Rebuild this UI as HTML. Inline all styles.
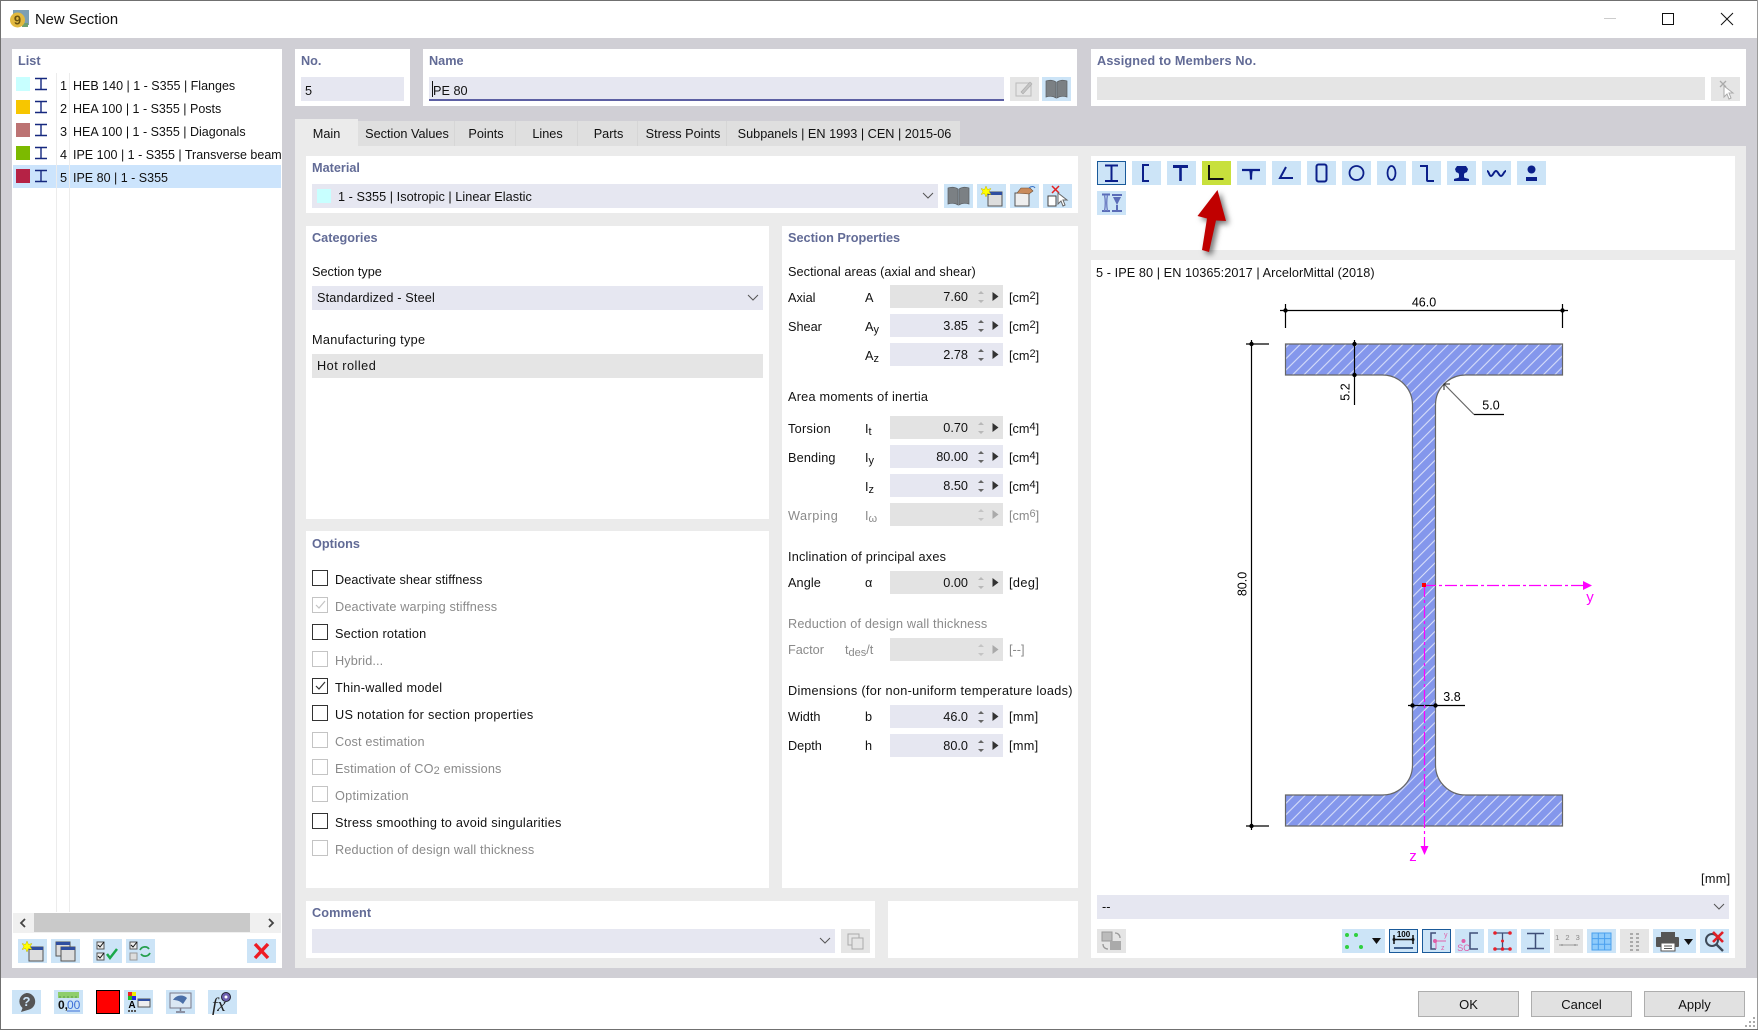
<!DOCTYPE html>
<html><head><meta charset="utf-8"><title>New Section</title>
<style>
html,body{margin:0;padding:0}
body{width:1758px;height:1030px;overflow:hidden;position:relative;background:#fff;font-family:"Liberation Sans",sans-serif;font-size:12.7px;color:#111}
div,svg{position:absolute}
svg{overflow:visible}
.p{background:#fff}
.t{white-space:nowrap;line-height:16px;height:16px}
.h{white-space:nowrap;line-height:16px;height:16px;font-weight:bold;color:#626b96}
.g{color:#8a8a8a}
.i{background:#e6e7f1;height:24px}
.d{background:#e5e5e5;height:24px}
.b{background:#cce4f7;width:29px;height:24px}
.n{left:890px;width:113px;height:23px;line-height:25px;background:#e6e7f1;text-align:right}
.n span{position:absolute;right:35px;top:0}
.n.e{background:#e3e3e3}
.n svg{left:0;top:0;width:113px;height:23px}
.c{left:312px;width:14px;height:14px;border:1px solid #333;background:#fff}
.c.o{border-color:#c4c4c4}
.tab{top:121px;height:25px;line-height:27px;background:#dfdfdf;text-align:center;border-right:1px solid #d6d6d6;white-space:nowrap;box-sizing:border-box;padding-left:2px}
.s{font-size:11px;vertical-align:-2px;line-height:0}
sup{font-size:11px;line-height:0;vertical-align:3px}
.btn{top:991px;width:101px;height:26px;box-sizing:border-box;background:#e1e1e1;border:1px solid #adadad;text-align:center;line-height:26px;font-size:13px}
</style></head><body>
<svg width="0" height="0" style="left:0;top:0"><defs>
<pattern id="hat" patternUnits="userSpaceOnUse" width="11.4" height="11.4" x="1" y="2"><rect width="11.4" height="11.4" fill="#8497ec"/><path d="M-1 12.4L12.4-1M-1 1L1-1M10.4 12.4L12.4 10.4" stroke="#dde3fa" stroke-width="1"/></pattern>
<symbol id="sp" viewBox="0 0 113 23"><path d="M88 9l3-3 3 3zM88 15l3 3 3-3z" fill="#666"/><path d="M102.500 7v9l6-4.500z" fill="#333"/></symbol>
<symbol id="spg" viewBox="0 0 113 23"><path d="M88 9l3-3 3 3zM88 15l3 3 3-3z" fill="#b8b8b8"/><path d="M102.500 7v9l6-4.500z" fill="#333"/></symbol>
<symbol id="spd" viewBox="0 0 113 23"><path d="M88 9l3-3 3 3zM88 15l3 3 3-3z" fill="#c4c4c4"/><path d="M102.500 7v9l6-4.500z" fill="#aaa"/></symbol>
<symbol id="ib" viewBox="0 0 14 14"><path d="M1 1.500h12M7 1.500v11M1 12.500h12" stroke="#15287f" stroke-width="1.400" fill="none"/></symbol>
<symbol id="book" viewBox="0 0 29 24"><path d="M4 4c3-1 7-1 10 1v16c-3-2-7-2-10-1zM25 4c-3-1-7-1-10 1v16c3-2 7-2 10-1z" fill="#7b8084" stroke="#5a5e62" stroke-width=".7"/></symbol>
<symbol id="win" viewBox="0 0 29 24"><rect x="11" y="8" width="14" height="14" fill="#ddd" stroke="#555"/><rect x="11" y="8" width="14" height="3" fill="#2f4ea0"/><path d="M9 2l1.500 3.500 3.500-1-2 3 2 3-3.500-1-1.500 3.500-1.500-3.500-3.500 1 2-3-2-3 3.500 1z" fill="#ff0" stroke="#c8b400" stroke-width=".5"/></symbol>
</defs></svg>

<!-- background -->
<div style="left:0;top:38px;width:1758px;height:940px;background:#d0cfd5"></div>
<div style="left:0;top:0;width:1758px;height:1px;background:#707070"></div>
<div style="left:0;top:0;width:1px;height:1030px;background:#707070"></div>
<div style="left:1757px;top:0;width:1px;height:1030px;background:#9a9a9a"></div>
<div style="left:0;top:1029px;width:1758px;height:1px;background:#707070"></div>

<!-- title -->
<svg style="left:10px;top:10px" width="19" height="19" viewBox="0 0 19 19"><rect x="3" y="0" width="16" height="15" fill="#7d9fb3"/><rect x="12" y="13" width="6" height="4" fill="#6fa06f"/><circle cx="7.500" cy="10" r="7.500" fill="#e2b93f"/><text x="7.500" y="14.500" text-anchor="middle" font-size="13" font-weight="bold" fill="#6a5210" font-family="Liberation Sans">9</text></svg>
<div class="t" style="left:35px;top:12px;font-size:14.8px">New Section</div>
<svg style="left:1600px;top:10px" width="140" height="18"><path d="M4 8.500h12" stroke="#ccc"/><rect x="62.500" y="3.500" width="11" height="11" fill="none" stroke="#111"/><path d="M121 3l12 12M133 3l-12 12" stroke="#111" stroke-width="1"/></svg>

<!-- List panel -->
<div class="p" style="left:12px;top:49px;width:270px;height:919px"></div>
<div class="h" style="left:18px;top:53px">List</div>
<div style="left:13px;top:165px;width:268px;height:23px;background:#cce4fc"></div>
<div style="left:56px;top:73px;width:1px;height:839px;background:#ececec"></div>
<div style="left:69px;top:73px;width:1px;height:839px;background:#ececec"></div>
<div style="left:16px;top:77px;width:14px;height:14px;background:#c8ffff"></div>
<div style="left:16px;top:100px;width:14px;height:14px;background:#f7c600"></div>
<div style="left:16px;top:123px;width:14px;height:14px;background:#bc7373"></div>
<div style="left:16px;top:146px;width:14px;height:14px;background:#7cba00"></div>
<div style="left:16px;top:169px;width:14px;height:14px;background:#b52245"></div>
<svg style="left:34px;top:77px" width="14" height="14"><use href="#ib"/></svg>
<svg style="left:34px;top:100px" width="14" height="14"><use href="#ib"/></svg>
<svg style="left:34px;top:123px" width="14" height="14"><use href="#ib"/></svg>
<svg style="left:34px;top:146px" width="14" height="14"><use href="#ib"/></svg>
<svg style="left:34px;top:169px" width="14" height="14"><use href="#ib"/></svg>
<div class="t" style="left:60px;top:78px">1</div><div class="t" style="left:73px;top:78px;font-size:12.5px">HEB 140 | 1 - S355 | Flanges</div>
<div class="t" style="left:60px;top:101px">2</div><div class="t" style="left:73px;top:101px;font-size:12.5px">HEA 100 | 1 - S355 | Posts</div>
<div class="t" style="left:60px;top:124px">3</div><div class="t" style="left:73px;top:124px;font-size:12.5px">HEA 100 | 1 - S355 | Diagonals</div>
<div class="t" style="left:60px;top:147px">4</div><div class="t" style="left:73px;top:147px;width:208px;overflow:hidden;font-size:12.5px">IPE 100 | 1 - S355 | Transverse beam</div>
<div class="t" style="left:60px;top:170px">5</div><div class="t" style="left:73px;top:170px;font-size:12.5px">IPE 80 | 1 - S355</div>
<!-- scrollbar -->
<div style="left:13px;top:913px;width:268px;height:20px;background:#f0f0f0"></div>
<div style="left:34px;top:913px;width:216px;height:19px;background:#c9c9c9"></div>
<svg style="left:13px;top:913px" width="268" height="20"><path d="M12 6l-4 4 4 4M256 6l4 4-4 4" fill="none" stroke="#444" stroke-width="1.800"/></svg>
<!-- list toolbar -->
<div class="b" style="left:18px;top:939px"></div><svg style="left:18px;top:939px" width="29" height="24"><use href="#win"/></svg>
<div class="b" style="left:51px;top:939px"></div><svg style="left:51px;top:939px" width="29" height="24"><rect x="5" y="3" width="14" height="14" fill="#ddd" stroke="#555"/><rect x="5" y="3" width="14" height="3" fill="#2f4ea0"/><rect x="10" y="8" width="14" height="14" fill="#ddd" stroke="#555"/><rect x="10" y="8" width="14" height="3" fill="#2f4ea0"/></svg>
<div class="b" style="left:93px;top:939px"></div><svg style="left:93px;top:939px" width="29" height="24"><rect x="4" y="3" width="7" height="7" fill="#eee" stroke="#555"/><rect x="4" y="14" width="7" height="7" fill="#eee" stroke="#555"/><path d="M5 6l2 2 4-5M5 17l2 2 4-5" fill="none" stroke="#111"/><path d="M14 15l3 4 7-9" fill="none" stroke="#1aa84a" stroke-width="2.500"/></svg>
<div class="b" style="left:126px;top:939px"></div><svg style="left:126px;top:939px" width="29" height="24"><rect x="4" y="3" width="7" height="7" fill="#eee" stroke="#555"/><rect x="4" y="14" width="7" height="7" fill="#ddd" stroke="#999"/><path d="M5 6l2 2 4-5" fill="none" stroke="#111"/><path d="M14 11c2-4 7-4 9-1M24 14c-2 4-7 4-9 1" fill="none" stroke="#27a04f" stroke-width="1.800"/></svg>
<div class="b" style="left:247px;top:939px"></div><svg style="left:247px;top:939px" width="29" height="24"><path d="M8 5l13 14M21 5L8 19" stroke="#ee1c24" stroke-width="3.400"/></svg>

<!-- No -->
<div class="p" style="left:295px;top:49px;width:115px;height:57px"></div>
<div class="h" style="left:301px;top:53px">No.</div>
<div class="i" style="left:301px;top:77px;width:103px"></div>
<div class="t" style="left:305px;top:83px">5</div>
<!-- Name -->
<div class="p" style="left:423px;top:49px;width:654px;height:57px"></div>
<div class="h" style="left:429px;top:53px">Name</div>
<div class="i" style="left:429px;top:77px;width:575px"></div>
<div style="left:429px;top:99px;width:575px;height:2px;background:#5c5fa3"></div>
<div style="left:432px;top:81px;width:1px;height:16px;background:#111"></div>
<div class="t" style="left:433px;top:83px">PE 80</div>
<div class="d" style="left:1010px;top:77px;width:29px"></div>
<svg style="left:1010px;top:77px" width="29" height="24"><rect x="6" y="6" width="15" height="13" fill="none" stroke="#bbb"/><path d="M11 15l9-10 2 2-9 10z" fill="#c4c4c4" stroke="#aaa" stroke-width=".6"/></svg>
<div class="b" style="left:1042px;top:77px"></div><svg style="left:1042px;top:77px" width="29" height="24"><use href="#book"/></svg>
<!-- Assigned -->
<div class="p" style="left:1091px;top:49px;width:655px;height:57px"></div>
<div class="h" style="left:1097px;top:53px;letter-spacing:.15px">Assigned to Members No.</div>
<div class="d" style="left:1097px;top:77px;width:608px;height:23px"></div>
<div class="d" style="left:1711px;top:77px;width:29px"></div>
<svg style="left:1711px;top:77px" width="29" height="24"><path d="M9 4l6 6M15 4l-6 6" stroke="#aaa" stroke-width="1.300"/><path d="M13 9v11l3-3 2 5 2-1-2-5h4z" fill="#fff" stroke="#aaa"/></svg>

<!-- Tabs -->
<div style="left:295px;top:146px;width:1451px;height:822px;background:#ebebeb"></div>
<div style="left:295px;top:119px;width:63px;height:27px;background:#ebebeb;text-align:center;line-height:31px">Main</div>
<div class="tab" style="left:358px;width:97px">Section Values</div>
<div class="tab" style="left:455px;width:61px">Points</div>
<div class="tab" style="left:516px;width:62px">Lines</div>
<div class="tab" style="left:578px;width:60px">Parts</div>
<div class="tab" style="left:638px;width:89px">Stress Points</div>
<div class="tab" style="left:727px;width:233px;border:0">Subpanels | EN 1993 | CEN | 2015-06</div>

<!-- Material -->
<div class="p" style="left:306px;top:156px;width:772px;height:57px"></div>
<div class="h" style="left:312px;top:160px">Material</div>
<div class="i" style="left:312px;top:184px;width:626px"></div>
<div style="left:317px;top:189px;width:14px;height:14px;background:#c8ffff"></div>
<div class="t" style="left:338px;top:189px;letter-spacing:.03px">1 - S355 | Isotropic | Linear Elastic</div>
<svg style="left:922px;top:192px" width="12" height="8"><path d="M1 1l5 5 5-5" fill="none" stroke="#555"/></svg>
<div class="b" style="left:944px;top:184px"></div><svg style="left:944px;top:184px" width="29" height="24"><use href="#book"/></svg>
<div class="b" style="left:977px;top:184px"></div><svg style="left:977px;top:184px" width="29" height="24"><use href="#win"/></svg>
<div class="b" style="left:1010px;top:184px"></div><svg style="left:1010px;top:184px" width="29" height="24"><rect x="5" y="9" width="14" height="13" fill="#eee" stroke="#555"/><path d="M7 9l4-5h9l3 3-4 3z" fill="#c98a5a" stroke="#6c4a30" stroke-width=".6"/><path d="M19 4c2-2 5-2 6 0" fill="none" stroke="#3a74c8"/></svg>
<div class="b" style="left:1043px;top:184px"></div><svg style="left:1043px;top:184px" width="29" height="24"><path d="M9 2l7 7M16 2l-7 7" stroke="#e32222" stroke-width="1.500"/><rect x="5" y="12" width="8" height="10" fill="#fff" stroke="#444"/><path d="M15 9v11l3-3 2 5 2-1-2-5h4z" fill="#fff" stroke="#666"/></svg>

<!-- Categories -->
<div class="p" style="left:306px;top:226px;width:463px;height:293px"></div>
<div class="h" style="left:312px;top:230px">Categories</div>
<div class="t" style="left:312px;top:264px">Section type</div>
<div class="i" style="left:312px;top:286px;width:451px"></div>
<div class="t" style="left:317px;top:290px;letter-spacing:.15px">Standardized - Steel</div>
<svg style="left:747px;top:294px" width="12" height="8"><path d="M1 1l5 5 5-5" fill="none" stroke="#555"/></svg>
<div class="t" style="left:312px;top:332px;letter-spacing:.3px">Manufacturing type</div>
<div class="d" style="left:312px;top:354px;width:451px"></div>
<div class="t" style="left:317px;top:358px;letter-spacing:.5px">Hot rolled</div>

<!-- Options -->
<div class="p" style="left:306px;top:531px;width:463px;height:357px"></div>
<div class="h" style="left:312px;top:536px">Options</div>
<div class="c" style="top:570px"></div><div class="t" style="left:335px;top:572px;letter-spacing:.09px">Deactivate shear stiffness</div>
<div class="c o" style="top:597px"></div><svg style="left:312px;top:597px" width="16" height="16"><path d="M4 8l3 3 6-7" fill="none" stroke="#c4c4c4" stroke-width="1.200"/></svg><div class="t g" style="left:335px;top:599px;letter-spacing:.16px">Deactivate warping stiffness</div>
<div class="c" style="top:624px"></div><div class="t" style="left:335px;top:626px;letter-spacing:.2px">Section rotation</div>
<div class="c o" style="top:651px"></div><div class="t g" style="left:335px;top:653px;letter-spacing:.12px">Hybrid...</div>
<div class="c" style="top:678px"></div><svg style="left:312px;top:678px" width="16" height="16"><path d="M4 8l3 3 6-7" fill="none" stroke="#333" stroke-width="1.200"/></svg><div class="t" style="left:335px;top:680px;letter-spacing:.26px">Thin-walled model</div>
<div class="c" style="top:705px"></div><div class="t" style="left:335px;top:707px;letter-spacing:.3px">US notation for section properties</div>
<div class="c o" style="top:732px"></div><div class="t g" style="left:335px;top:734px;letter-spacing:.15px">Cost estimation</div>
<div class="c o" style="top:759px"></div><div class="t g" style="left:335px;top:761px;letter-spacing:.17px">Estimation of CO<span style="font-size:11px;vertical-align:-1px">2</span> emissions</div>
<div class="c o" style="top:786px"></div><div class="t g" style="left:335px;top:788px;letter-spacing:.28px">Optimization</div>
<div class="c" style="top:813px"></div><div class="t" style="left:335px;top:815px;letter-spacing:.26px">Stress smoothing to avoid singularities</div>
<div class="c o" style="top:840px"></div><div class="t g" style="left:335px;top:842px;letter-spacing:.16px">Reduction of design wall thickness</div>

<!-- Section Properties -->
<div class="p" style="left:782px;top:226px;width:296px;height:662px"></div>
<div class="h" style="left:788px;top:230px">Section Properties</div>
<div class="t" style="left:788px;top:264px;letter-spacing:.07px">Sectional areas (axial and shear)</div>
<div class="t" style="left:788px;top:290px">Axial</div><div class="t" style="left:865px;top:290px">A</div>
<div class="n e" style="top:285px"><span>7.60</span><svg><use href="#spg"/></svg></div><div class="t" style="left:1009px;top:290px">[cm<sup>2</sup>]</div>
<div class="t" style="left:788px;top:319px">Shear</div><div class="t" style="left:865px;top:319px">A<span class="s">y</span></div>
<div class="n" style="top:314px"><span>3.85</span><svg><use href="#sp"/></svg></div><div class="t" style="left:1009px;top:319px">[cm<sup>2</sup>]</div>
<div class="t" style="left:865px;top:348px">A<span class="s">z</span></div>
<div class="n" style="top:343px"><span>2.78</span><svg><use href="#sp"/></svg></div><div class="t" style="left:1009px;top:348px">[cm<sup>2</sup>]</div>
<div class="t" style="left:788px;top:389px;letter-spacing:.24px">Area moments of inertia</div>
<div class="t" style="left:788px;top:421px;letter-spacing:.3px">Torsion</div><div class="t" style="left:865px;top:421px">I<span class="s">t</span></div>
<div class="n e" style="top:416px"><span>0.70</span><svg><use href="#spg"/></svg></div><div class="t" style="left:1009px;top:421px">[cm<sup>4</sup>]</div>
<div class="t" style="left:788px;top:450px;letter-spacing:.15px">Bending</div><div class="t" style="left:865px;top:450px">I<span class="s">y</span></div>
<div class="n" style="top:445px"><span>80.00</span><svg><use href="#sp"/></svg></div><div class="t" style="left:1009px;top:450px">[cm<sup>4</sup>]</div>
<div class="t" style="left:865px;top:479px">I<span class="s">z</span></div>
<div class="n" style="top:474px"><span>8.50</span><svg><use href="#sp"/></svg></div><div class="t" style="left:1009px;top:479px">[cm<sup>4</sup>]</div>
<div class="t g" style="left:788px;top:508px;letter-spacing:.5px">Warping</div><div class="t g" style="left:865px;top:508px">I<span class="s">ω</span></div>
<div class="n e" style="top:503px"><svg><use href="#spd"/></svg></div><div class="t g" style="left:1009px;top:508px">[cm<sup>6</sup>]</div>
<div class="t" style="left:788px;top:549px;letter-spacing:.2px">Inclination of principal axes</div>
<div class="t" style="left:788px;top:575px;letter-spacing:.1px">Angle</div><div class="t" style="left:865px;top:575px">α</div>
<div class="n e" style="top:571px"><span>0.00</span><svg><use href="#spg"/></svg></div><div class="t" style="left:1009px;top:575px;letter-spacing:.4px">[deg]</div>
<div class="t g" style="left:788px;top:616px;letter-spacing:.16px">Reduction of design wall thickness</div>
<div class="t g" style="left:788px;top:642px">Factor</div><div class="t g" style="left:845px;top:642px">t<span class="s">des</span>/t</div>
<div class="n e" style="top:638px"><svg><use href="#spd"/></svg></div><div class="t g" style="left:1009px;top:642px">[--]</div>
<div class="t" style="left:788px;top:683px;letter-spacing:.32px">Dimensions (for non-uniform temperature loads)</div>
<div class="t" style="left:788px;top:709px">Width</div><div class="t" style="left:865px;top:709px">b</div>
<div class="n" style="top:705px"><span>46.0</span><svg><use href="#sp"/></svg></div><div class="t" style="left:1009px;top:709px;letter-spacing:.3px">[mm]</div>
<div class="t" style="left:788px;top:738px">Depth</div><div class="t" style="left:865px;top:738px">h</div>
<div class="n" style="top:734px"><span>80.0</span><svg><use href="#sp"/></svg></div><div class="t" style="left:1009px;top:738px;letter-spacing:.3px">[mm]</div>

<!-- Comment -->
<div class="p" style="left:306px;top:901px;width:569px;height:57px"></div>
<div class="h" style="left:312px;top:905px;letter-spacing:.1px">Comment</div>
<div class="i" style="left:312px;top:929px;width:523px"></div>
<svg style="left:819px;top:937px" width="12" height="8"><path d="M1 1l5 5 5-5" fill="none" stroke="#555"/></svg>
<div class="d" style="left:841px;top:929px;width:29px"></div>
<svg style="left:841px;top:929px" width="29" height="24"><rect x="7" y="5" width="11" height="11" fill="none" stroke="#aaa"/><rect x="11" y="9" width="11" height="11" fill="#e5e5e5" stroke="#aaa"/></svg>
<div class="p" style="left:888px;top:901px;width:190px;height:57px"></div>

<!-- section type toolbar -->
<div class="p" style="left:1091px;top:156px;width:644px;height:94px"></div>
<div style="left:1097px;top:161px;width:27px;height:22px;background:#cce4f7;border:1px solid #1a5a9a"></div>
<svg style="left:1097px;top:161px" width="29" height="24"><path d="M8 4.500h13M8 20h13" stroke="#0b1f8a" stroke-width="2"/><path d="M14.500 5v14" stroke="#0b1f8a" stroke-width="2"/></svg>
<div class="b" style="left:1132px;top:161px"></div><svg style="left:1132px;top:161px" width="29" height="24"><path d="M17 4H11v16h6" fill="none" stroke="#0b1f8a" stroke-width="2"/></svg>
<div class="b" style="left:1167px;top:161px"></div><svg style="left:1167px;top:161px" width="29" height="24"><path d="M6 5.500h15" stroke="#0b1f8a" stroke-width="3"/><path d="M13.500 5v15" stroke="#0b1f8a" stroke-width="2.600"/></svg>
<div class="b" style="left:1202px;top:161px;background:#c8e03c"></div><svg style="left:1202px;top:161px" width="29" height="24"><path d="M7 4v14h14.500" fill="none" stroke="#111" stroke-width="2"/></svg>
<div class="b" style="left:1237px;top:161px"></div><svg style="left:1237px;top:161px" width="29" height="24"><path d="M5 9h18" stroke="#0b1f8a" stroke-width="2.200"/><path d="M12.500 9c1 2 1 6 1 9h1c0-3 0-7 1-9" fill="#0b1f8a" stroke="#0b1f8a" stroke-width="1.200"/></svg>
<div class="b" style="left:1272px;top:161px"></div><svg style="left:1272px;top:161px" width="29" height="24"><path d="M14 6L8 17h13" fill="none" stroke="#0b1f8a" stroke-width="2"/></svg>
<div class="b" style="left:1307px;top:161px"></div><svg style="left:1307px;top:161px" width="29" height="24"><rect x="9.500" y="3.500" width="10" height="17" rx="2" fill="none" stroke="#0b1f8a" stroke-width="2"/></svg>
<div class="b" style="left:1342px;top:161px"></div><svg style="left:1342px;top:161px" width="29" height="24"><circle cx="14.500" cy="12" r="7" fill="none" stroke="#0b1f8a" stroke-width="1.800"/></svg>
<div class="b" style="left:1377px;top:161px"></div><svg style="left:1377px;top:161px" width="29" height="24"><ellipse cx="14.500" cy="12" rx="4" ry="7" fill="none" stroke="#0b1f8a" stroke-width="1.800"/></svg>
<div class="b" style="left:1412px;top:161px"></div><svg style="left:1412px;top:161px" width="29" height="24"><path d="M8 5h7v14c0 1 .5 1 1 1h6" fill="none" stroke="#0b1f8a" stroke-width="2"/></svg>
<div class="b" style="left:1447px;top:161px"></div><svg style="left:1447px;top:161px" width="29" height="24"><path d="M10 5h9l2 3-1 3c-2 1-3 1-3 3v2c0 1 2 1 5 2v2H7v-2c3-1 5-1 5-2v-2c0-2-1-2-3-3L8 8z" fill="#0b1f8a"/></svg>
<div class="b" style="left:1482px;top:161px"></div><svg style="left:1482px;top:161px" width="29" height="24"><path d="M5 10c2 0 2 5 4 5s3-5 5-5 3 5 5 5 3-5 5-5" fill="none" stroke="#0b1f8a" stroke-width="2"/></svg>
<div class="b" style="left:1517px;top:161px"></div><svg style="left:1517px;top:161px" width="29" height="24"><circle cx="14.500" cy="8.500" r="4" fill="#0b1f8a"/><rect x="9" y="16" width="11" height="4" fill="#0b1f8a"/></svg>
<div class="b" style="left:1097px;top:191px"></div><svg style="left:1097px;top:191px" width="29" height="24"><path d="M5 3.500h8M5 20h8" stroke="#5a6cb8" stroke-width="2"/><path d="M7.500 4c1 5 1 11 0 16M10.500 4c-1 5-1 11 0 16" fill="none" stroke="#6f80c4" stroke-width="1.400"/><path d="M15 3h10v2H15zM16 6l4 8 4-8zM19 14h2v5h-2zM15 19h10v2H15z" fill="#5a6cb8"/></svg>

<!-- Arrow -->
<svg style="left:1190px;top:185px;filter:drop-shadow(3px 3px 3px rgba(0,0,0,.55))" width="50" height="72" viewBox="1190 185 50 72"><path d="M1217.500 190L1197.500 216L1207 218.500L1202 250L1209 252L1216 220.500L1226 221z" fill="#c00000"/></svg>

<!-- Preview -->
<div class="p" style="left:1091px;top:260px;width:644px;height:698px"></div>
<div class="t" style="left:1096px;top:265px;letter-spacing:.07px">5 - IPE 80 | EN 10365:2017 | ArcelorMittal (2018)</div>
<svg style="left:1091px;top:260px" width="644" height="698" viewBox="1091 260 644 698" font-family="Liberation Sans" font-size="12.500">
<path d="M1285.500 344H1562.500V375H1465.500A30 30 0 0 0 1435.500 405V765A30 30 0 0 0 1465.500 795H1562.500V826H1285.500V795H1382.500A30 30 0 0 0 1412.500 765V405A30 30 0 0 0 1382.500 375H1285.500Z" fill="url(#hat)" stroke="#666" stroke-width="1.200"/>
<g stroke="#000" stroke-width="1.200" fill="none">
<path d="M1280 310.500H1568M1285.500 304V328M1562.500 304V328"/>
<path d="M1251.500 340V830M1246 344H1269M1246 826H1269"/>
<path d="M1354.500 340V405"/>
<path d="M1408 705.500H1465"/>
<path d="M1474 414.500H1504"/>
</g>
<path d="M1444.500 384.500L1474 414.500" stroke="#666" stroke-width="1.200" fill="none"/>
<path d="M1444 390v-6h6" stroke="#222" fill="none"/>
<g fill="#000"><circle cx="1285.500" cy="310.500" r="2.200"/><circle cx="1562.500" cy="310.500" r="2.200"/><circle cx="1251.500" cy="344" r="2.200"/><circle cx="1251.500" cy="826" r="2.200"/><circle cx="1354.500" cy="344" r="2.200"/><circle cx="1354.500" cy="375" r="2.200"/><circle cx="1412.500" cy="705.500" r="2.200"/><circle cx="1435.500" cy="705.500" r="2.200"/></g>
<text x="1424" y="306.500" text-anchor="middle">46.0</text>
<text x="1491" y="409.500" text-anchor="middle">5.0</text>
<text x="1452" y="701" text-anchor="middle">3.8</text>
<text transform="translate(1349.500 392) rotate(-90)" text-anchor="middle">5.2</text>
<text transform="translate(1246.500 584) rotate(-90)" text-anchor="middle">80.0</text>
<path d="M1424 585.500H1584" stroke="#f0f" stroke-width="1.200" stroke-dasharray="12 3 3 3" fill="none"/>
<path d="M1424.500 585V848" stroke="#f0f" stroke-width="1.200" stroke-dasharray="12 3 3 3" fill="none"/>
<path d="M1583 581l9 4.500-9 4.500zM1420.500 846l4 9 4-9z" fill="#f0f"/>
<rect x="1422" y="583" width="4" height="4" fill="#f00"/>
<text x="1590" y="602" text-anchor="middle" fill="#f0f" font-size="15">y</text>
<text x="1413" y="861" text-anchor="middle" fill="#f0f" font-size="15">z</text>
</svg>
<div class="t" style="left:1701px;top:871px;letter-spacing:.3px">[mm]</div>
<div class="i" style="left:1097px;top:895px;width:632px"></div>
<div class="t" style="left:1102px;top:899px">--</div>
<svg style="left:1713px;top:903px" width="12" height="8"><path d="M1 1l5 5 5-5" fill="none" stroke="#555"/></svg>

<!-- preview toolbar -->
<div class="d" style="left:1097px;top:929px;width:29px"></div>
<svg style="left:1097px;top:929px" width="29" height="24"><rect x="5" y="3" width="10" height="9" fill="#bbb" stroke="#999"/><rect x="13" y="12" width="11" height="9" fill="#aaa"/><path d="M18 4c3 0 5 2 5 5M11 20c-3 0-5-2-5-5" fill="none" stroke="#999" stroke-width="1.300"/></svg>
<div class="b" style="left:1342px;top:929px;width:43px"></div>
<svg style="left:1342px;top:929px" width="43" height="24"><g fill="#2fd03f"><circle cx="5" cy="6" r="2"/><circle cx="14" cy="6" r="2"/><circle cx="5" cy="18" r="2"/><circle cx="19" cy="18" r="2"/></g><path d="M30 9h9l-4.500 6z" fill="#111"/></svg>
<div style="left:1389px;top:929px;width:27px;height:22px;background:#cce4f7;border:1px solid #1a5a9a"></div>
<svg style="left:1389px;top:929px" width="29" height="24"><path d="M5 6v9M24 6v9M5 10.500h19" stroke="#111" stroke-width="1.500"/><circle cx="5" cy="10.500" r="1.500" fill="#111"/><circle cx="24" cy="10.500" r="1.500" fill="#111"/><path d="M5 18h19v2H5z" fill="#3f5f8c"/><text x="14.500" y="8" text-anchor="middle" font-size="8" font-weight="bold" font-family="Liberation Sans">100</text></svg>
<div style="left:1422px;top:929px;width:27px;height:22px;background:#cce4f7;border:1px solid #1a5a9a"></div>
<svg style="left:1422px;top:929px" width="29" height="24"><path d="M14 4H9v16h5" fill="none" stroke="#3f4f78" stroke-width="1.500"/><path d="M13 12h11M14 12v8" stroke="#e05fa8"/><circle cx="13" cy="12" r="2" fill="#e05fa8"/><text x="22" y="8" font-size="7" fill="#e05fa8" font-family="Liberation Sans">y</text><text x="19" y="21" font-size="7" fill="#e05fa8" font-family="Liberation Sans">z</text></svg>
<div class="b" style="left:1455px;top:929px"></div>
<svg style="left:1455px;top:929px" width="29" height="24"><path d="M23 4h-8v16h8" fill="none" stroke="#3f4f78" stroke-width="1.500"/><circle cx="8.500" cy="12" r="2" fill="#e05fa8"/><text x="8.500" y="22" text-anchor="middle" font-size="9" fill="#e05fa8" font-family="Liberation Sans">SC</text></svg>
<div class="b" style="left:1488px;top:929px"></div>
<svg style="left:1488px;top:929px" width="29" height="24"><path d="M7 4h15M7 20h15M14.500 4v16" stroke="#3f4f78" stroke-width="1.300"/><g fill="#e8202a"><circle cx="7" cy="4" r="1.800"/><circle cx="22" cy="4" r="1.800"/><circle cx="7" cy="20" r="1.800"/><circle cx="22" cy="20" r="1.800"/><circle cx="14.500" cy="12" r="1.500"/><circle cx="14.500" cy="20" r="1.800"/></g></svg>
<div class="b" style="left:1521px;top:929px"></div>
<svg style="left:1521px;top:929px" width="29" height="24"><path d="M6 4.500h17M6 19.500h17M14.500 5v14" stroke="#3f4f78" stroke-width="1.500"/></svg>
<div class="d" style="left:1554px;top:929px;width:29px"></div>
<svg style="left:1554px;top:929px" width="29" height="24"><path d="M5 16h19" stroke="#999"/><circle cx="8" cy="16" r="1" fill="#999"/><circle cx="21" cy="16" r="1" fill="#999"/><text x="14.500" y="11" text-anchor="middle" font-size="7.500" fill="#888" letter-spacing="2" font-family="Liberation Sans">1 2 3</text></svg>
<div class="b" style="left:1587px;top:929px"></div>
<svg style="left:1587px;top:929px" width="29" height="24"><rect x="5" y="4" width="19" height="17" fill="#8ecbfb" stroke="#4aa0ee"/><path d="M11.300 4v17M17.600 4v17M5 9.600h19M5 15.300h19" stroke="#4aa0ee"/></svg>
<div class="d" style="left:1620px;top:929px;width:29px"></div>
<svg style="left:1620px;top:929px" width="29" height="24"><g fill="#aaa"><rect x="10" y="4" width="3" height="2"/><rect x="16" y="4" width="3" height="2"/><rect x="10" y="8" width="3" height="2"/><rect x="16" y="8" width="3" height="2"/><rect x="10" y="12" width="3" height="2"/><rect x="16" y="12" width="3" height="2"/><rect x="10" y="16" width="3" height="2"/><rect x="16" y="16" width="3" height="2"/><rect x="10" y="20" width="3" height="2"/><rect x="16" y="20" width="3" height="2"/></g></svg>
<div class="b" style="left:1653px;top:929px;width:43px"></div>
<svg style="left:1653px;top:929px" width="43" height="24"><rect x="8" y="3" width="14" height="6" fill="#555"/><rect x="3" y="8" width="23" height="10" rx="1" fill="#555"/><rect x="8" y="14" width="14" height="8" fill="#fff" stroke="#555"/><path d="M11 17h8M11 19.500h8" stroke="#555"/><path d="M31 10h9l-4.500 6z" fill="#111"/></svg>
<div class="b" style="left:1700px;top:929px"></div>
<svg style="left:1700px;top:929px" width="29" height="24"><circle cx="12" cy="11" r="6" fill="#cce4f7" stroke="#3e4a58" stroke-width="2"/><path d="M16 15l7 7" stroke="#3e4a58" stroke-width="2.400"/><path d="M13 3l10 10M23 3L13 13" stroke="#e01f26" stroke-width="2.600"/></svg>

<!-- bottom bar -->
<div class="b" style="left:12px;top:990px"></div><svg style="left:12px;top:990px" width="29" height="24"><path d="M14.500 3a8.500 8.500 0 0 1 2 16.800L9 22l1.500-4A8.500 8.500 0 0 1 14.500 3z" fill="#555"/><text x="14.500" y="16" text-anchor="middle" font-size="13" font-weight="bold" fill="#cce4f7" font-family="Liberation Sans">?</text></svg>
<div class="b" style="left:54px;top:990px"></div><svg style="left:54px;top:990px" width="29" height="24"><rect x="4" y="2" width="21" height="6" fill="#8fce6c"/><path d="M6 6v2M10 6v2M14 6v2M18 6v2M22 6v2" stroke="#5a9a45"/><text x="4" y="19" font-size="12" font-weight="bold" fill="#111" font-family="Liberation Sans">0,</text><text x="13" y="19" font-size="12" fill="#3c6fd8" font-family="Liberation Sans">00</text><path d="M13 21h13" stroke="#3c6fd8"/></svg>
<div style="left:96px;top:990px;width:22px;height:22px;background:#f00;border:1px solid #000"></div>
<div class="b" style="left:124px;top:990px"></div><svg style="left:124px;top:990px" width="29" height="24"><rect x="4" y="2" width="4" height="4" fill="#e22"/><rect x="8" y="2" width="4" height="4" fill="#ee0"/><rect x="4" y="6" width="4" height="4" fill="#2b2"/><rect x="8" y="6" width="4" height="4" fill="#22d"/><text x="8" y="18" text-anchor="middle" font-size="10" font-weight="bold" font-family="Liberation Sans">A</text><rect x="14" y="9" width="12" height="8" fill="#eee" stroke="#555"/><rect x="14" y="9" width="12" height="2" fill="#2f4ea0"/><path d="M4 21h8" stroke="#555" stroke-width="2" stroke-dasharray="2 1"/></svg>
<div class="b" style="left:166px;top:990px"></div><svg style="left:166px;top:990px" width="29" height="24"><rect x="4" y="3" width="21" height="15" fill="#dbe8f4" stroke="#778"/><path d="M7 10c3-5 10-6 14-2l-4 6c-3-3-6-4-10-4z" fill="#4a6fa8"/><path d="M14.500 18v3M10 22h9" stroke="#778" stroke-width="1.500"/></svg>
<div class="b" style="left:208px;top:990px"></div><svg style="left:208px;top:990px" width="29" height="24"><text x="4" y="21" font-size="19" font-style="italic" font-family="Liberation Serif" fill="#222">fx</text><circle cx="18" cy="7" r="4.500" fill="#6d5fb0" stroke="#223" /><circle cx="18" cy="7" r="1.500" fill="#fff"/></svg>

<div class="btn" style="left:1418px">OK</div>
<div class="btn" style="left:1531px">Cancel</div>
<div class="btn" style="left:1644px">Apply</div>
<svg style="left:1745px;top:1017px" width="12" height="12"><g fill="#aaa"><rect x="8" y="0" width="2" height="2"/><rect x="4" y="4" width="2" height="2"/><rect x="8" y="4" width="2" height="2"/><rect x="0" y="8" width="2" height="2"/><rect x="4" y="8" width="2" height="2"/><rect x="8" y="8" width="2" height="2"/></g></svg>
</body></html>
